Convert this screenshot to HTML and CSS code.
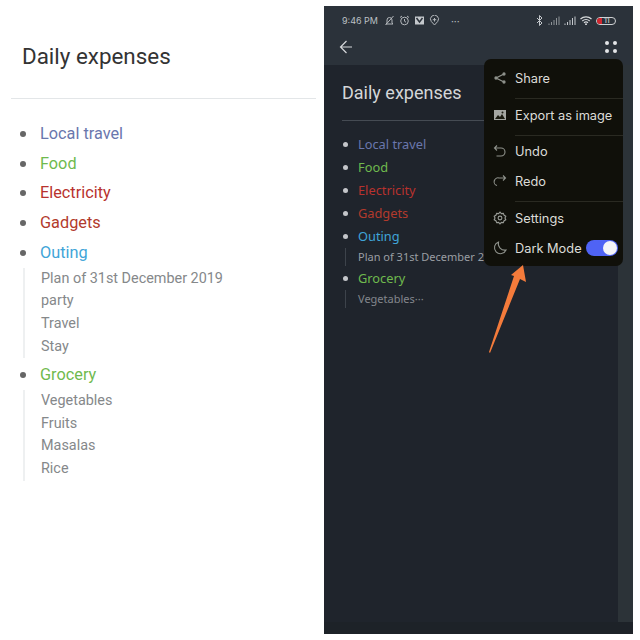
FILE: index.html
```html
<!DOCTYPE html>
<html lang="en">
<head>
    <meta charset="UTF-8">
    <meta name="viewport" content="width=device-width, initial-scale=1.0">
    <title>Daily expenses</title>
    <link rel="stylesheet" href="styles.css">
</head>
<body>

    <div class="light-page">
        <h1 class="light-title">Daily expenses</h1>
        <ul class="light-list">
            <li class="blue">Local travel</li>
            <li class="green">Food</li>
            <li class="red">Electricity</li>
            <li class="brick">Gadgets</li>
            <li class="sky">Outing</li>
        </ul>
        <div class="light-notes">
            <p>Plan of 31st December 2019</p>
            <p>party</p>
            <p>Travel</p>
            <p>Stay</p>
        </div>
        <ul class="light-list">
            <li class="green">Grocery</li>
        </ul>
        <div class="light-notes">
            <p>Vegetables</p>
            <p>Fruits</p>
            <p>Masalas</p>
            <p>Rice</p>
        </div>
    </div>

    <div class="phone">
        <div class="phone-top">
            <div class="status">
                <span class="time">9:46 PM</span>
                <svg width="11" height="11" viewBox="0 0 11 11" fill="none" stroke="#b4b8bc"><path d="M3 8V5a2.500 2.500 0 0 1 5 0v3l1 1H2zM1.500 10L9.500 1"/></svg>
                <svg width="11" height="11" viewBox="0 0 11 11" fill="none" stroke="#b4b8bc"><circle cx="5.500" cy="6" r="3.800"/><path d="M5.500 4v2.200l1.500 1M1 2.500L3 1M10 2.500L8 1"/></svg>
                <svg width="11" height="11" viewBox="0 0 11 11"><rect x="1" y="1.500" width="9" height="8" fill="#c4c8cc"/><path d="M2.500 3l3 4 3-4" fill="none" stroke="#2b323a" stroke-width="1.500"/></svg>
                <svg width="11" height="11" viewBox="0 0 11 11" fill="none" stroke="#b4b8bc"><path d="M5.500 10L2.300 6.500a4 4 0 1 1 6.400 0z"/><path d="M5.500 3v3.500M3.800 4.700h3.400"/></svg>
                <span class="more">···</span>
                <span class="status-right">
                    <svg width="8" height="11" viewBox="0 0 8 11" fill="none" stroke="#c4c8cc"><path d="M1 3l5 5-2.500 2.500v-10L6 3 1 8"/></svg>
                    <svg width="12" height="9" viewBox="0 0 12 9" fill="none" stroke="#8d9296"><path d="M1 9V7.500M3.500 9V6M6 9V4M8.500 9V2M11 9V0.500"/></svg>
                    <svg width="12" height="9" viewBox="0 0 12 9" fill="none" stroke="#c4c8cc"><path d="M1 9V7.500M3.500 9V6M6 9V4M8.500 9V2M11 9V0.500"/></svg>
                    <svg width="12" height="9" viewBox="0 0 12 9" fill="none" stroke="#d8dadc" stroke-width="1.200"><path d="M0.500 3a8 8 0 0 1 11 0M2.300 5a5.300 5.300 0 0 1 7.400 0M4 6.800a2.800 2.800 0 0 1 4 0"/><circle cx="6" cy="8.300" r="0.400"/></svg>
                    <span class="battery"><span class="battery-fill"></span><span class="battery-num">11</span></span>
                </span>
            </div>
            <div class="toolbar">
                <svg width="14" height="14" viewBox="0 0 14 14" fill="none" stroke="#d5d7da" stroke-width="1.200"><path d="M7.500 1L1.500 7l6 6M1.500 7H13"/></svg>
                <div class="dots"><i></i><i></i><i></i><i></i></div>
            </div>
        </div>

        <div class="phone-main">
            <div class="doc">
                <h2 class="doc-title">Daily expenses</h2>
                <ul class="doc-list">
                    <li class="blue">Local travel</li>
                    <li class="green">Food</li>
                    <li class="red">Electricity</li>
                    <li class="brick">Gadgets</li>
                    <li class="sky">Outing</li>
                </ul>
                <div class="doc-notes"><p>Plan of 31st December 2019</p></div>
                <ul class="doc-list">
                    <li class="green">Grocery</li>
                </ul>
                <div class="doc-notes dim"><p>Vegetables···</p></div>
            </div>
            <div class="side-strip"></div>
        </div>
        <div class="phone-bottom"></div>

        <div class="menu">
            <div class="menu-item">
                <svg width="14" height="14" viewBox="0 0 14 14" fill="#8f928c" stroke="#8f928c" stroke-width="1.300"><path d="M11 3L3 7l8 4" fill="none"/><circle cx="11" cy="3" r="1"/><circle cx="3" cy="7" r="1"/><circle cx="11" cy="11" r="1"/></svg>
                <span>Share</span>
            </div>
            <div class="menu-line"></div>
            <div class="menu-item">
                <svg width="14" height="14" viewBox="0 0 14 14"><rect x="1" y="2" width="12" height="10" fill="#a4a6a2"/><path d="M2 11l3-4 2 2 2-3 3 5z" fill="#1a1a10"/><circle cx="9.500" cy="4.500" r="1" fill="#1a1a10"/></svg>
                <span>Export as image</span>
            </div>
            <div class="menu-line"></div>
            <div class="menu-item short">
                <svg width="14" height="14" viewBox="0 0 14 14" fill="none" stroke="#8f928c" stroke-width="1.100"><path d="M4 1.500L1.500 4 4 6.500M1.500 4H8a3.500 3.500 0 0 1 0 8H3.500"/></svg>
                <span>Undo</span>
            </div>
            <div class="menu-item short redo">
                <svg width="14" height="14" viewBox="0 0 14 14" fill="none" stroke="#8f928c" stroke-width="1.100"><path d="M10 1.500L12.500 4 10 6.500M12.500 4H6a3.800 3.800 0 0 0-2 7.500"/></svg>
                <span>Redo</span>
            </div>
            <div class="menu-line"></div>
            <div class="menu-item">
                <svg width="14" height="14" viewBox="0 0 14 14" fill="none" stroke="#9a9d98" stroke-width="1.100"><path d="M7 1l1.300 1.600 2-.2.800 1.900 1.700 1L12 7l.8 1.700-1.700 1-.8 1.900-2-.2L7 13l-1.300-1.600-2 .2-.8-1.900-1.700-1L2 7l-.8-1.700 1.700-1 .8-1.900 2 .2z"/><circle cx="7" cy="7" r="1.900"/></svg>
                <span>Settings</span>
            </div>
            <div class="menu-item short last">
                <svg width="14" height="14" viewBox="0 0 14 14" fill="none" stroke="#8f928c" stroke-width="1.100"><path d="M5.500 1a6 6 0 1 0 7.500 8A6.500 6.500 0 0 1 5.500 1z"/></svg>
                <span>Dark Mode</span>
                <div class="toggle"><div class="knob"></div></div>
            </div>
        </div>

        <svg class="arrow" width="42" height="92" viewBox="0 0 42 92">
            <path d="M2 88L27 12 24 11 36 1 39 18 33 15 3 89z" fill="#f47b3b"/>
        </svg>
    </div>

</body>
</html>
```

FILE: styles.css
```css
* {
    box-sizing: border-box;
}
body {
    margin: 0;
    height: 640px;
    background-color: #fff;
    display: flex;
    overflow: hidden;
}
p, ul, h1, h2 {
    margin: 0;
    padding: 0;
    font-weight: 400;
}
ul {
    list-style: none;
}

.blue { color: #6a77ad; }
.green { color: #6fba4e; }
.red { color: #b8322e; }
.brick { color: #b23a2c; }
.sky { color: #3fa5d8; }

/* left side, light theme */
.light-page {
    width: 324px;
    padding: 0 8px 0 11px;
    font-family: Roboto, sans-serif;
}
.light-title {
    font-size: 22.4px;
    line-height: 28px;
    color: #333;
    padding: 42px 0 28px 11px;
    border-bottom: 1px solid #e3e6e8;
    margin-bottom: 20px;
}
.light-list li {
    position: relative;
    padding-left: 29px;
    font-size: 16.3px;
    line-height: 29.7px;
}
.light-list li::before {
    content: "";
    position: absolute;
    left: 9px;
    top: 12px;
    width: 6px;
    height: 6px;
    border-radius: 50%;
    background-color: #666;
}
.light-notes {
    margin: 0 0 2px 12px;
    padding-left: 16px;
    border-left: 2px solid #eef0f1;
    font-size: 14.4px;
    line-height: 22.7px;
    color: #85888a;
}

/* right side, phone */
.phone {
    position: relative;
    width: 309px;
    height: 628px;
    margin-top: 6px;
    background-color: #1f242c;
    display: flex;
    flex-direction: column;
    overflow: hidden;
}
.phone-top {
    height: 59px;
    background-color: #2b323a;
    flex-shrink: 0;
}
.status {
    display: flex;
    align-items: center;
    gap: 4px;
    height: 28px;
    padding: 1px 17px 0 18px;
    font-family: Inter, sans-serif;
    font-size: 9px;
    color: #bcc0c4;
}
.time {
    margin-right: 2px;
}
.more {
    margin-left: 7px;
    font-size: 10px;
}
.status-right {
    margin-left: auto;
    display: flex;
    align-items: center;
    gap: 4px;
}
.battery {
    position: relative;
    width: 20px;
    height: 8px;
    border: 1px solid #d0d2d4;
    border-radius: 4px;
    overflow: hidden;
    display: block;
}
.battery-fill {
    position: absolute;
    left: 0;
    top: 0;
    bottom: 0;
    width: 5px;
    background-color: #d2272f;
}
.battery-num {
    position: absolute;
    left: 7px;
    top: -1px;
    font-size: 7px;
    line-height: 8px;
    color: #e4e4e4;
}
.toolbar {
    display: flex;
    align-items: center;
    justify-content: space-between;
    height: 26px;
    padding: 0 16px 0 15px;
}
.dots {
    display: grid;
    grid-template-columns: 4px 4px;
    gap: 4px;
}
.dots i {
    width: 4px;
    height: 4px;
    border-radius: 50%;
    background-color: #e4e6e8;
}
.phone-main {
    flex: 1;
    display: flex;
    min-height: 0;
}
.doc {
    flex: 1;
    padding: 0 0 0 18px;
    font-family: "Noto Sans", sans-serif;
}
.doc-title {
    font-family: Roboto, sans-serif;
    font-size: 18px;
    line-height: 24px;
    color: #d4d6d8;
    padding-top: 16px;
    padding-bottom: 15px;
    border-bottom: 1px solid #454b53;
    margin-bottom: 12px;
}
.doc-list li {
    position: relative;
    padding-left: 16px;
    font-size: 12.8px;
    line-height: 23px;
}
.doc-list li::before {
    content: "";
    position: absolute;
    left: 1px;
    top: 9px;
    width: 5px;
    height: 5px;
    border-radius: 50%;
    background-color: #c4c6ca;
}
.doc-notes {
    margin: 0 0 1px 3px;
    padding-left: 12px;
    border-left: 1px solid #3d434b;
    font-size: 11px;
    line-height: 18px;
    color: #9a9ea3;
    white-space: nowrap;
}
.doc-notes.dim {
    color: #83878c;
}
.side-strip {
    width: 15px;
    background-color: #2c3338;
    flex-shrink: 0;
}
.phone-bottom {
    height: 12px;
    background-color: #1d2228;
    flex-shrink: 0;
}

/* popup menu */
.menu {
    position: absolute;
    left: 160px;
    top: 53px;
    width: 139px;
    height: 207px;
    padding-top: 3px;
    background-color: #10100a;
    border-radius: 7px;
    font-family: Inter, sans-serif;
    font-size: 12.8px;
    color: #dcdcd8;
}
.menu-item {
    display: flex;
    align-items: center;
    gap: 8px;
    height: 32px;
    padding-left: 9px;
}
.menu-item.short {
    height: 30px;
}
.menu-item.redo {
    height: 31px;
    padding-bottom: 1px;
}
.menu-item.last {
    padding-bottom: 2px;
}
.menu-line {
    height: 1px;
    margin: 4px 0 0 31px;
    background-color: #2a2a22;
}
.toggle {
    position: absolute;
    left: 102px;
    bottom: 10px;
    width: 32px;
    height: 16px;
    padding: 1px;
    border-radius: 8px;
    background-color: #4f63f5;
    display: flex;
    justify-content: flex-end;
}
.knob {
    width: 14px;
    height: 14px;
    border-radius: 50%;
    background-color: #f4f4f8;
}
.arrow {
    position: absolute;
    left: 163px;
    top: 258px;
}
```
